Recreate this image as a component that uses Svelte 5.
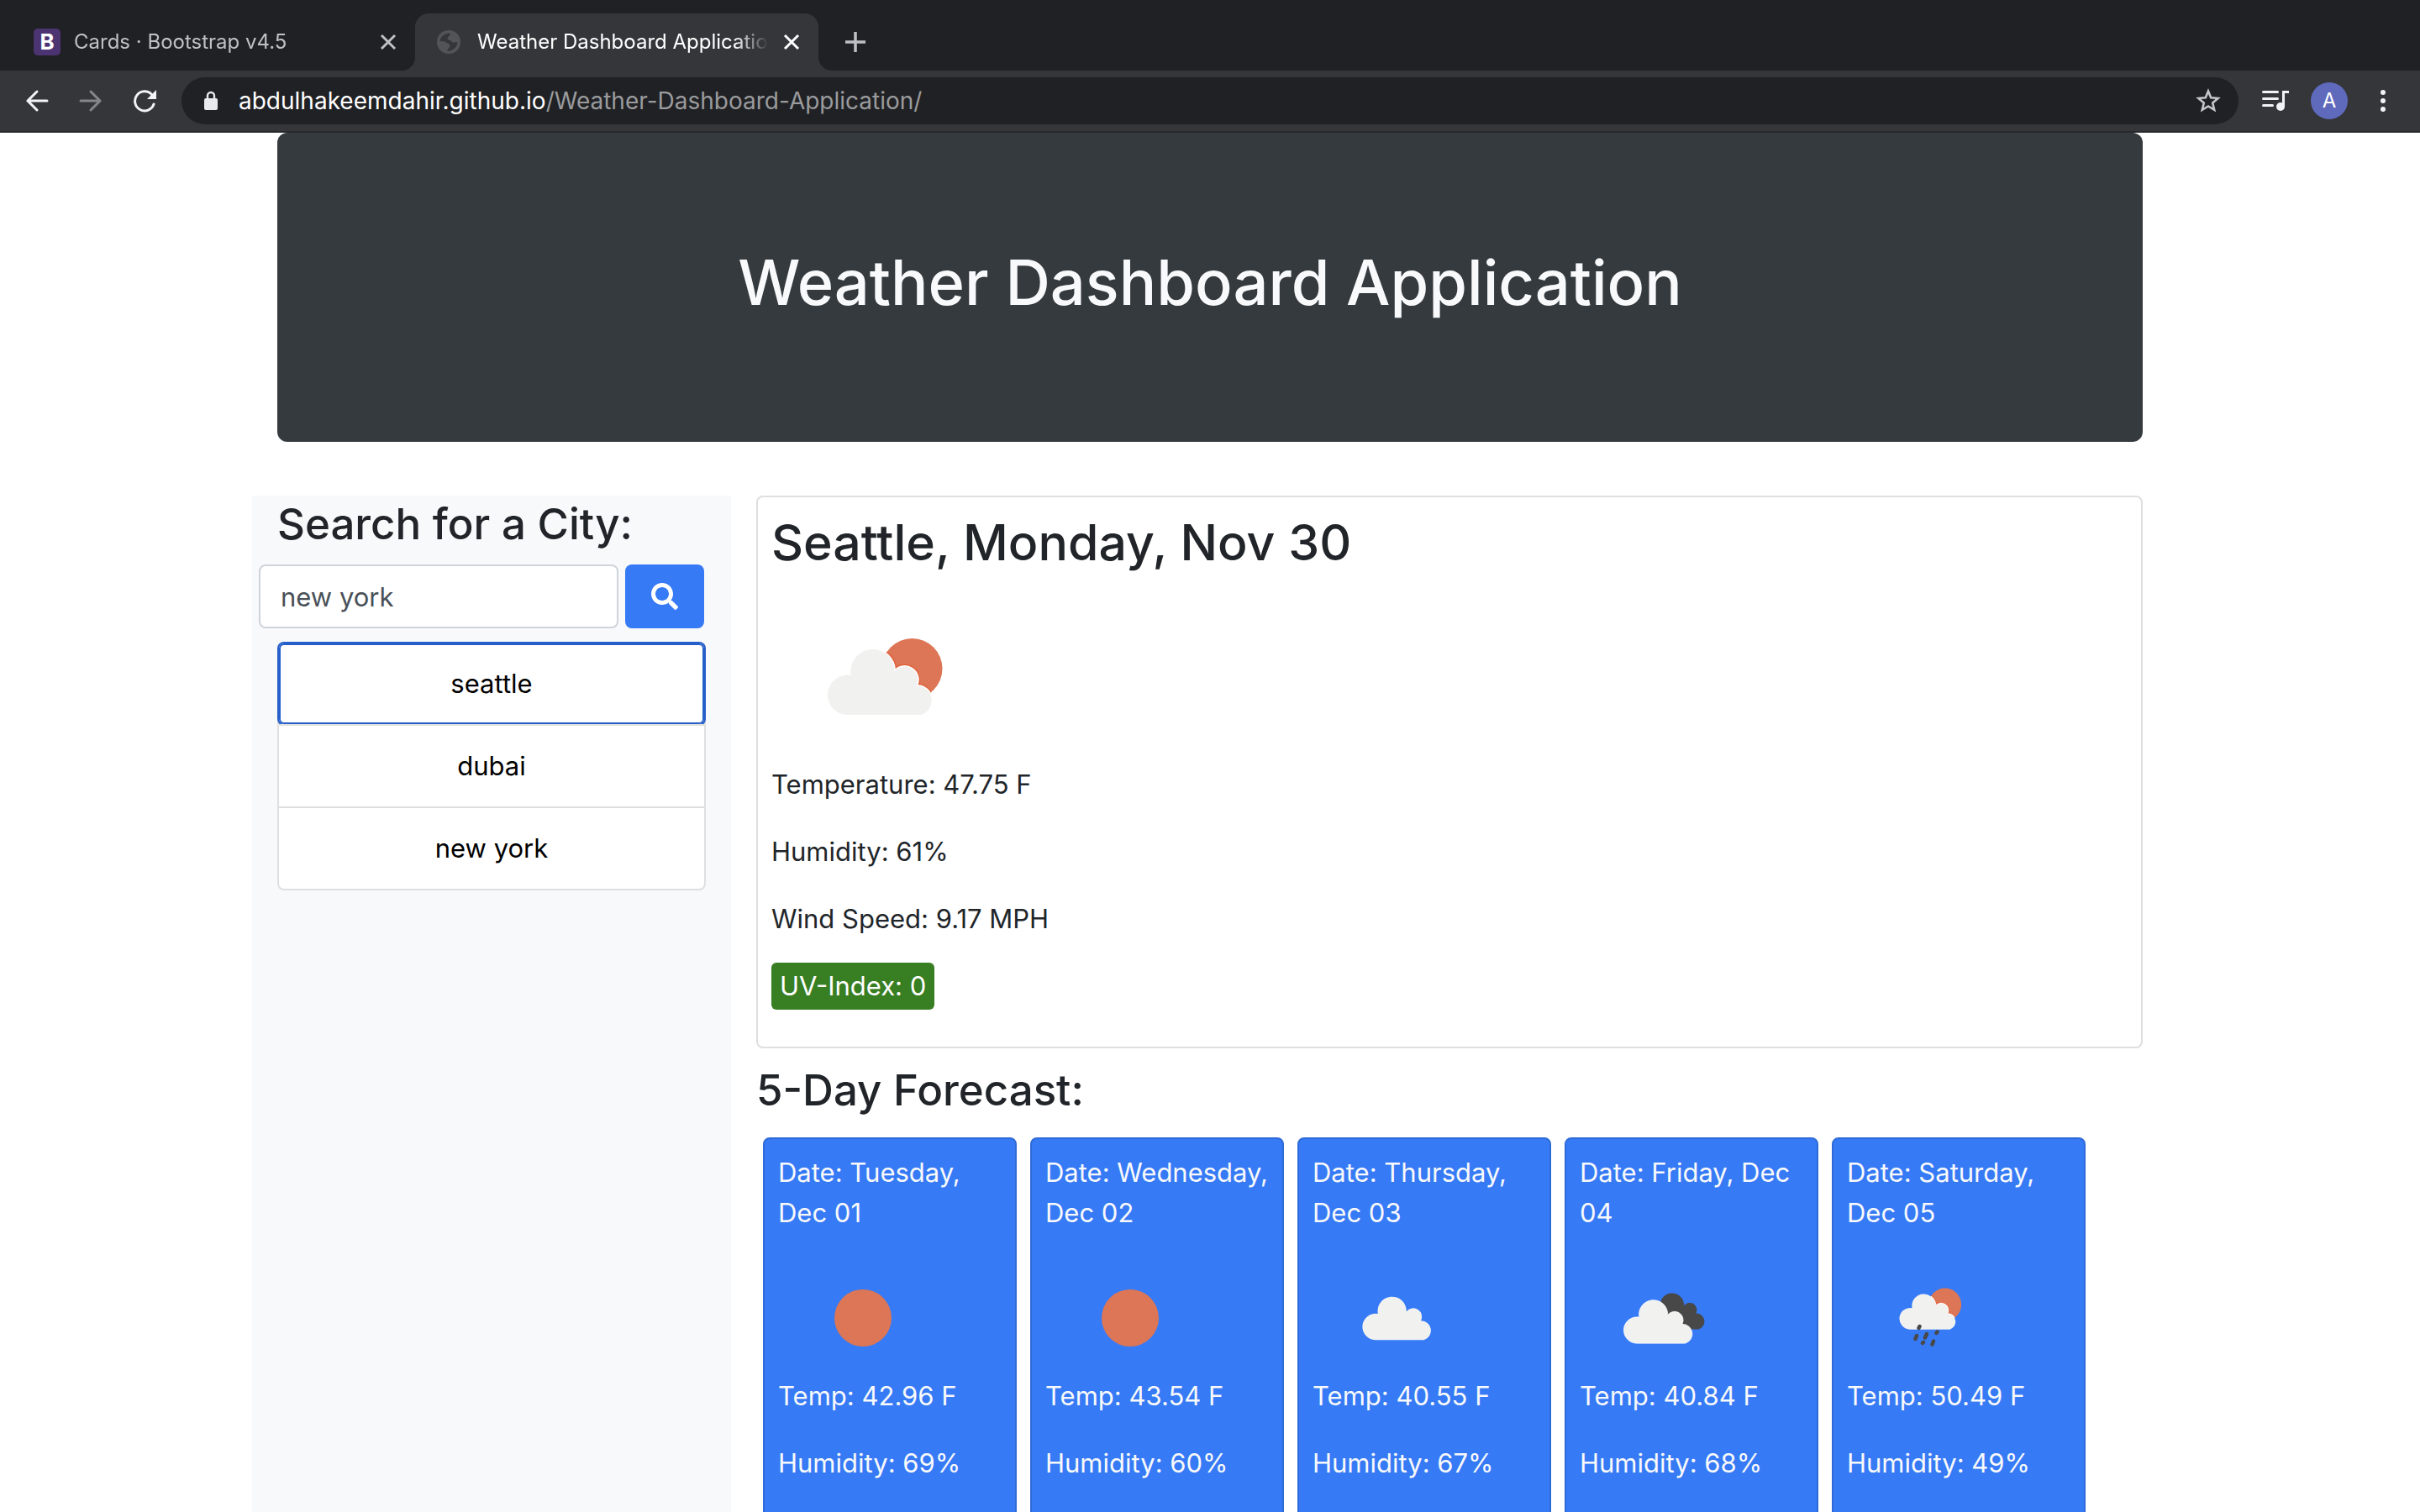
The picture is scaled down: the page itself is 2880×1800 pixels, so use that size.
<script>
  let city = $state('new york');

  const history = ['seattle', 'dubai', 'new york'];

  const forecast = [
    { date: 'Tuesday, Dec 01', icon: 'sun', temp: '42.96', humidity: 69 },
    { date: 'Wednesday, Dec 02', icon: 'sun', temp: '43.54', humidity: 60 },
    { date: 'Thursday, Dec 03', icon: 'cloud', temp: '40.55', humidity: 67 },
    { date: 'Friday, Dec 04', icon: 'clouds', temp: '40.84', humidity: 68 },
    { date: 'Saturday, Dec 05', icon: 'rain', temp: '50.49', humidity: 49 }
  ];

  const cloudPath =
    'M22 79A23.7 23.7 0 1 1 27 32A26 26 0 1 1 78.5 27.5A15.6 15.6 0 0 1 104.5 44.5A17.6 17.6 0 0 1 110 79Z';
</script>

{#snippet cross()}
  <svg width="24" height="24" viewBox="0 0 24 24" aria-hidden="true">
    <path d="M4 4L20 20M20 4L4 20" fill="none" stroke="currentColor" stroke-width="3" />
  </svg>
{/snippet}

{#snippet sunCloud(id)}
  <clipPath id={id}><circle cx="99.5" cy="24" r="36" /></clipPath>
  <circle cx="99.5" cy="24" r="36" fill="#dc7656" />
  <path d={cloudPath} clip-path="url(#{id})" fill="none" stroke="#e0623a" stroke-width="6" />
  <path d={cloudPath} clip-path="url(#{id})" fill="none" stroke="#fdfdfd" stroke-width="3" />
  <path d={cloudPath} fill="#f1f1f0" />
{/snippet}

<div class="window">
  <header class="chrome">
    <nav class="tabs" aria-label="Browser tabs">
      <div class="tab">
        <svg class="favicon" width="32" height="32" viewBox="0 0 32 32" aria-hidden="true">
          <rect width="32" height="32" rx="5" fill="#4c3372" />
          <text x="16" y="25" text-anchor="middle" class="b">B</text>
        </svg>
        <span class="tab-title">Cards · Bootstrap v4.5</span>
        <button class="close" aria-label="Close tab">{@render cross()}</button>
      </div>
      <div class="tab active">
        <svg class="favicon" width="32" height="32" viewBox="0 0 32 32" aria-hidden="true">
          <circle cx="14" cy="16" r="14" fill="#535458" />
          <path
            d="M3.500 15C4 10 9 5.500 15.500 5.500C17 8.500 12 9.500 12.500 12C13 14.500 16 13 17.500 15.500C19 17.500 21 16 24.500 16C24 22 19.500 26.500 12.500 27C12 24 15.500 23.500 15.500 20.500C15.500 17.500 12 18 10.500 16C9.500 14.500 6 15.500 3.500 15Z"
            fill="#35363a"
          />
        </svg>
        <span class="tab-title">Weather Dashboard Application</span>
        <button class="close" aria-label="Close tab">{@render cross()}</button>
      </div>
      <button class="new-tab" aria-label="New tab">
        <svg width="26" height="26" viewBox="0 0 26 26"><path d="M13 1V25M1 13H25" stroke="currentColor" stroke-width="3.500" /></svg>
      </button>
    </nav>

    <div class="toolbar">
      <button class="tool" aria-label="Back">
        <svg width="28" height="28" viewBox="0 0 28 28"><path d="M26 14H3M14 3L3 14L14 25" fill="none" stroke="currentColor" stroke-width="3" stroke-linecap="round" /></svg>
      </button>
      <button class="tool dim" aria-label="Forward">
        <svg width="28" height="28" viewBox="0 0 28 28"><path d="M2 14H25M14 3L25 14L14 25" fill="none" stroke="currentColor" stroke-width="3" stroke-linecap="round" /></svg>
      </button>
      <button class="tool" aria-label="Reload">
        <svg width="28" height="28" viewBox="0 0 28 28">
          <path d="M25 18A11.500 11.500 0 1 1 22.500 6.500" fill="none" stroke="currentColor" stroke-width="3" stroke-linecap="round" />
          <path d="M28 1V12H17Z" fill="currentColor" />
        </svg>
      </button>
      <div class="omnibox">
        <svg class="lock" width="18" height="24" viewBox="0 0 18 24" aria-hidden="true">
          <rect x="1" y="9" width="16" height="14" rx="2" fill="#e8eaed" />
          <path d="M5 10V6A4 4 0 0 1 13 6V10" fill="none" stroke="#e8eaed" stroke-width="2.400" />
        </svg>
        <label for="address">abdulhakeemdahir.github.io</label>
        <input id="address" type="text" value="/Weather-Dashboard-Application/" />
        <button class="star" aria-label="Bookmark this page">
          <svg width="32" height="32" viewBox="0 0 32 32">
            <path d="M16 4.500L19.200 12.300L27.600 13L21.200 18.500L23.200 26.800L16 22.400L8.800 26.800L10.800 18.500L4.400 13L12.800 12.300Z" fill="none" stroke="currentColor" stroke-width="2.600" />
          </svg>
        </button>
      </div>
      <button class="tool" aria-label="Media controls">
        <svg width="32" height="28" viewBox="0 0 32 28">
          <path d="M1.500 3.500H18.500M1.500 11.500H18.500M1.500 19.500H12.500" stroke="currentColor" stroke-width="3" stroke-linecap="round" />
          <circle cx="22" cy="21" r="5" fill="currentColor" />
          <path d="M24 21V2H32V5H27V21Z" fill="currentColor" />
        </svg>
      </button>
      <button class="tool" aria-label="Profile"><span class="avatar">A</span></button>
      <button class="tool" aria-label="Menu">
        <svg width="8" height="28" viewBox="0 0 8 28"><g fill="currentColor"><circle cx="4" cy="4" r="3" /><circle cx="4" cy="14" r="3" /><circle cx="4" cy="24" r="3" /></g></svg>
      </button>
    </div>
  </header>

  <main class="page">
    <div class="jumbotron"><h1>Weather Dashboard Application</h1></div>

    <div class="row">
      <aside class="sidebar">
        <h3><label for="city">Search for a City:</label></h3>
        <form class="search" onsubmit={(e) => e.preventDefault()}>
          <input id="city" type="text" bind:value={city} />
          <button class="go" aria-label="Search">
            <svg width="32" height="32" viewBox="0 0 512 512">
              <path
                fill="currentColor"
                d="M505 442.7L405.3 343c-4.5-4.5-10.6-7-17-7H372c27.6-35.3 44-79.7 44-128C416 93.1 322.9 0 208 0S0 93.1 0 208s93.1 208 208 208c48.3 0 92.7-16.4 128-44v16.3c0 6.4 2.5 12.5 7 17l99.7 99.7c9.4 9.4 24.6 9.4 33.9 0l28.3-28.3c9.4-9.4 9.4-24.6.1-34zM208 336c-70.7 0-128-57.2-128-128 0-70.7 57.2-128 128-128 70.7 0 128 57.2 128 128 0 70.7-57.2 128-128 128z"
              />
            </svg>
          </button>
        </form>
        <ul class="cities">
          {#each history as name, i}
            <li><button class:selected={i === 0}>{name}</button></li>
          {/each}
        </ul>
      </aside>

      <section class="content">
        <article class="today">
          <h2>Seattle, Monday, Nov 30</h2>
          <svg class="today-icon" width="272" height="210" viewBox="0 0 272 210" role="img" aria-label="Few clouds">
            <g transform="translate(68 72)">{@render sunCloud('today-sun')}</g>
          </svg>
          <p>Temperature: 47.75 F</p>
          <p>Humidity: 61%</p>
          <p>Wind Speed: 9.17 MPH</p>
          <p class="uv"><span>UV-Index: 0</span></p>
        </article>

        <h3>5-Day Forecast:</h3>
        <div class="days">
          {#each forecast as day}
            <article class="day">
              <p>Date: {day.date}</p>
              <svg width="200" height="138" viewBox="0 0 200 138" role="img" aria-label={day.icon}>
                {#if day.icon === 'sun'}
                  <circle cx="101" cy="69" r="34" fill="#dc7656" />
                {:else if day.icon === 'cloud'}
                  <g transform="translate(60 43) scale(.66)"><path d={cloudPath} fill="#f1f1f0" /></g>
                {:else if day.icon === 'clouds'}
                  <g transform="translate(81 39) scale(.55)"><path d={cloudPath} fill="#484849" /></g>
                  <g transform="translate(53 47) scale(.66)">
                    <path d={cloudPath} fill="#f1f1f0" stroke="#ffffff" stroke-width="1" />
                  </g>
                {:else}
                  <g transform="translate(63 40) scale(.54)">{@render sunCloud('rain-sun')}</g>
                  <path
                    d="M86.500 79L85.500 81M83 90L81.500 94M95 88L93 92.500M107.500 85.500L106.500 87M91 98L90 99M103 96.500L101.500 100.500"
                    stroke="#484849"
                    stroke-width="4.500"
                    stroke-linecap="round"
                  />
                {/if}
              </svg>
              <p>Temp: {day.temp} F</p>
              <p>Humidity: {day.humidity}%</p>
            </article>
          {/each}
        </div>
      </section>
    </div>
  </main>
</div>

<style>
  :global(body) {
    margin: 0;
    background: #fff;
  }
  .window,
  .window :global(*) {
    box-sizing: border-box;
  }
  .window {
    display: flex;
    flex-direction: column;
    height: 100vh;
    overflow: hidden;
    font-family: Inter, 'Liberation Sans', sans-serif;
    font-size: 31px;
    line-height: 48px;
    color: #212529;
  }
  h1, h2, h3, p, ul {
    margin: 0;
    padding: 0;
  }
  h1, h2, h3 {
    font-weight: 500;
  }
  button,
  input {
    font: inherit;
    color: inherit;
    background: none;
    border: 0;
    padding: 0;
    outline: none;
  }
  svg {
    display: block;
    flex: none;
  }

  .chrome {
    flex: none;
    background: #202124;
    color: #f1f3f4;
  }
  .tabs {
    display: flex;
    height: 84px;
    padding: 16px 14px 0;
  }
  .tab {
    position: relative;
    display: flex;
    align-items: center;
    gap: 16px;
    width: 480px;
    padding: 0 20px 0 26px;
    font-size: 24px;
    line-height: 32px;
    color: #bfc1c5;
  }
  .tab.active {
    background: #35363a;
    border-radius: 16px 16px 0 0;
    color: #fff;
  }
  .tab.active::before,
  .tab.active::after {
    content: '';
    position: absolute;
    bottom: 0;
    width: 16px;
    height: 16px;
  }
  .tab.active::before {
    right: 100%;
    background: radial-gradient(circle at 0 0, transparent 16px, #35363a 16px);
  }
  .tab.active::after {
    left: 100%;
    background: radial-gradient(circle at 100% 0, transparent 16px, #35363a 16px);
  }
  .b {
    font-size: 26px;
    font-weight: 700;
    fill: #fff;
  }
  .tab-title {
    flex: 1;
    min-width: 0;
    overflow: hidden;
    white-space: nowrap;
    mask-image: linear-gradient(90deg, #000 calc(100% - 40px), transparent);
  }
  .close {
    display: grid;
    width: 24px;
    height: 24px;
  }
  .new-tab {
    display: grid;
    place-items: center;
    width: 56px;
    margin-left: 16px;
    color: #bdc1c6;
  }

  .toolbar {
    display: flex;
    align-items: center;
    gap: 16px;
    padding: 8px 20px;
    background: #35363a;
    border-bottom: 2px solid #28292b;
  }
  .tool {
    display: grid;
    place-items: center;
    flex: none;
    width: 48px;
    height: 48px;
  }
  .dim {
    color: #85868a;
  }
  .omnibox {
    display: flex;
    align-items: center;
    flex: 1;
    height: 56px;
    margin: 0 4px;
    padding: 0 20px 0 26px;
    border-radius: 28px;
    background: #202124;
    font-size: 28px;
    line-height: 40px;
  }
  .lock {
    margin-right: 24px;
  }
  .omnibox label {
    color: #fff;
  }
  .omnibox input {
    flex: 1;
    min-width: 0;
    color: #9a9b9d;
  }
  .star {
    color: #c4c5c7;
  }
  .avatar {
    display: grid;
    place-items: center;
    width: 44px;
    height: 44px;
    border-radius: 50%;
    background: #5f6abc;
    color: #fff;
    font-size: 24px;
    line-height: 32px;
  }

  .page {
    display: flex;
    flex-direction: column;
    flex: 1;
    min-height: 0;
    width: 100%;
    max-width: 2280px;
    margin: 0 auto;
  }
  .jumbotron {
    flex: none;
    margin: 0 30px 64px;
    padding: 130px 64px 142px;
    border-radius: 12px;
    background: #353a3e;
    color: #f8f9fa;
    text-align: center;
  }
  h1 {
    font-size: 74px;
    line-height: 96px;
  }
  h2 {
    font-size: 59px;
    line-height: 76px;
  }
  h3 {
    font-size: 51px;
    line-height: 68px;
  }
  .row {
    display: grid;
    grid-template-columns: minmax(0, 1fr) minmax(0, 3fr);
    flex: 1;
    min-height: 0;
  }
  .sidebar {
    background: #f8f9fa;
    padding: 0 30px;
  }
  .search {
    display: flex;
    gap: 8px;
    margin: 14px 2px 16px -22px;
  }
  .search input {
    flex: 1;
    min-width: 0;
    height: 76px;
    padding: 0 24px;
    border: 2px solid #ced4da;
    border-radius: 8px;
    background: #fff;
    color: #495057;
  }
  .go {
    display: grid;
    place-items: center;
    width: 94px;
    border-radius: 8px;
    background: #367af6;
    color: #fff;
  }
  .cities {
    list-style: none;
    border: 2px solid #dfdfdf;
    border-radius: 8px;
    background: #fff;
  }
  .cities li + li {
    border-top: 2px solid #dfdfdf;
  }
  .cities button {
    display: block;
    width: 100%;
    height: 96px;
    color: #000;
    text-align: center;
  }
  .cities .selected {
    border-radius: 6px;
    box-shadow: inset 0 0 0 2px #265fc9, 0 0 0 2px #265fc9;
  }

  .content {
    padding: 0 30px;
  }
  .today {
    display: flex;
    flex-direction: column;
    gap: 32px;
    margin-bottom: 16px;
    padding: 16px 16px 48px;
    border: 2px solid #dfdfdf;
    border-radius: 8px;
  }
  .today-icon {
    margin: -16px 0 -32px;
  }
  .today .uv {
    display: flex;
    margin: -4px 0;
  }
  .uv span {
    padding: 4px 10px;
    border-radius: 6px;
    background: #387e22;
    color: #fff;
  }
  .days {
    display: grid;
    grid-template-columns: repeat(5, minmax(0, 1fr));
    gap: 16px;
    padding: 22px 68px 0 8px;
  }
  .day {
    padding: 16px 12px 18px 16px;
    border: 2px solid #2f6bd8;
    border-radius: 8px;
    background: #367af6;
    color: #f8f9fa;
  }
  .day p {
    margin-bottom: 32px;
  }
</style>
